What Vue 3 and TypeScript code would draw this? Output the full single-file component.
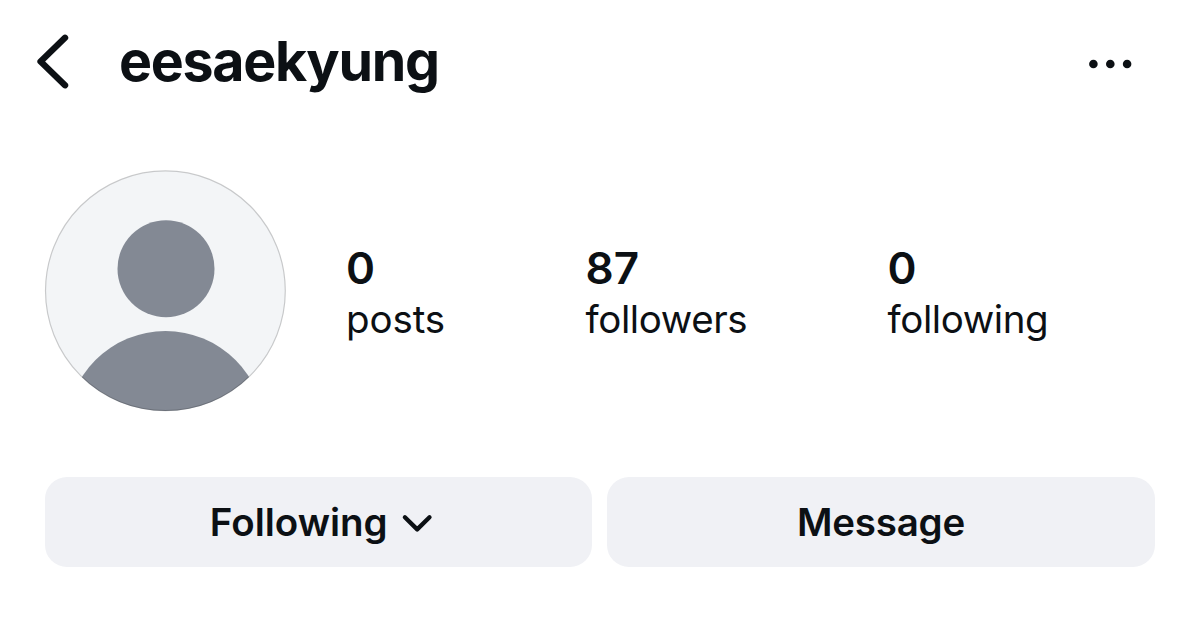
<script setup lang="ts">
interface Stat {
  key: string
  value: number
  label: string
}

const username = 'eesaekyung'
const stats: Stat[] = [
  { key: 'posts', value: 0, label: 'posts' },
  { key: 'followers', value: 87, label: 'followers' },
  { key: 'following', value: 0, label: 'following' },
]
</script>

<template>
  <main class="profile">
    <header class="topbar">
      <svg class="back" viewBox="0 0 40 60" aria-hidden="true">
        <path d="M33 6.8 8.6 30.5 33 54.2" />
      </svg>
      <h1 class="username">{{ username }}</h1>
      <svg class="more" viewBox="0 0 50 20" aria-hidden="true">
        <circle cx="8.4" cy="10" r="4.3" />
        <circle cx="25.3" cy="10" r="4.3" />
        <circle cx="42.1" cy="10" r="4.3" />
      </svg>
    </header>

    <section class="summary">
      <svg class="avatar" viewBox="0 0 242 242" aria-hidden="true">
        <defs>
          <clipPath id="avatar-clip"><circle cx="121.4" cy="120.8" r="120.3" /></clipPath>
        </defs>
        <g clip-path="url(#avatar-clip)">
          <rect class="backdrop" width="242" height="242" />
          <circle class="figure" cx="122" cy="98.7" r="48.5" />
          <circle class="figure" cx="121.5" cy="260" r="99" />
        </g>
        <circle class="ring" cx="121.4" cy="120.8" r="119.9" />
      </svg>
      <div class="stats">
        <div v-for="stat in stats" :key="stat.key" class="stat" :class="stat.key">
          <span class="value">{{ stat.value }}</span>
          <span class="label">{{ stat.label }}</span>
        </div>
      </div>
    </section>

    <div class="actions">
      <button class="action toggle" type="button">
        <span>Following</span>
        <svg class="chevron" viewBox="0 0 32 20" aria-hidden="true">
          <path d="M3.9 4.2 16.2 16.4 28.5 4.2" />
        </svg>
      </button>
      <button class="action message" type="button">
        <span>Message</span>
      </button>
    </div>
  </main>
</template>

<style>
body {
  margin: 0;
  background: #fff;
}
</style>

<style scoped>
.profile {
  box-sizing: border-box;
  width: 1200px;
  height: 620px;
  overflow: hidden;
  background: #fff;
  color: #0c1014;
  font-family: Inter, "Liberation Sans", sans-serif;
}

.topbar {
  display: flex;
  align-items: center;
  height: 121px;
  padding: 0 60px 0 32px;
  box-sizing: border-box;
}

.back {
  width: 40px;
  height: 60px;
  margin-top: 1px;
  fill: none;
  stroke: #0c1014;
  stroke-width: 6.4;
  stroke-linecap: round;
  stroke-linejoin: round;
}

.username {
  margin: 0 auto 0 47px;
  font-size: 55.5px;
  font-weight: 700;
  line-height: 71px;
  letter-spacing: -1.3px;
}

.more {
  width: 50px;
  height: 20px;
  margin: 6px 5px 0 0;
  fill: #0c1014;
}

.summary {
  display: flex;
  height: 242px;
  margin: 49px 0 0 44px;
}

.avatar {
  flex: none;
  width: 242px;
  height: 242px;
}

.backdrop {
  fill: #f3f5f7;
}

.figure {
  fill: #838994;
}

.ring {
  fill: none;
  stroke: #000;
  stroke-opacity: 0.18;
  stroke-width: 1.2;
}

.stats {
  display: grid;
  grid-template-columns: 239.5px 302px 200px;
  margin: 73px 0 0 60px;
}

.stat {
  display: flex;
  flex-direction: column;
  align-items: flex-start;
}

.value {
  font-size: 44px;
  font-weight: 600;
  line-height: 50px;
}

.label {
  margin-top: 1px;
  font-size: 38.5px;
  line-height: 50px;
  letter-spacing: -0.4px;
}

.posts .label {
  letter-spacing: -0.1px;
}

.actions {
  display: grid;
  grid-template-columns: 547px 548px;
  gap: 15px;
  margin: 65px 0 0 45px;
}

.action {
  display: flex;
  align-items: center;
  justify-content: center;
  height: 90px;
  padding: 0;
  border: 0;
  border-radius: 22px;
  background: #f0f1f5;
  color: inherit;
  font: 600 38.5px/50px Inter, "Liberation Sans", sans-serif;
}

.toggle {
  padding-left: 6px;
}

.message {
  letter-spacing: -0.2px;
}

.chevron {
  width: 32px;
  height: 20px;
  margin: 1px 0 0 13.5px;
  fill: none;
  stroke: #0c1014;
  stroke-width: 4.3;
  stroke-linecap: round;
  stroke-linejoin: round;
}
</style>
